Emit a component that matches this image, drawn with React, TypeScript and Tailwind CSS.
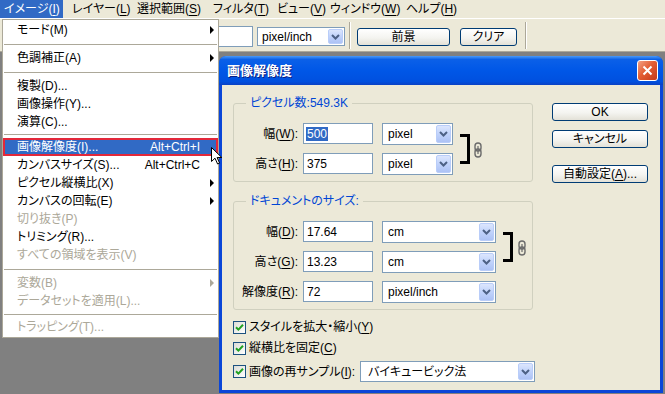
import React from "react";

const font =
  "font-['Liberation_Sans','Noto_Sans_CJK_JP',sans-serif] [font-feature-settings:'palt']";

const menuBar = [
  { label: "イメージ", key: "I", cls: "w-[63px] pl-[4px] bg-[#316ac5] text-white" },
  { label: "レイヤー", key: "L", cls: "ml-[9px] w-[65px]" },
  { label: "選択範囲", key: "S", cls: "w-[76px]" },
  { label: "フィルタ", key: "T", cls: "w-[64px]" },
  { label: "ビュー", key: "V", cls: "w-[53px]" },
  { label: "ウィンドウ", key: "W", cls: "w-[76px]" },
  { label: "ヘルプ", key: "H", cls: "" },
];

function Key({ k }: { k: string }) {
  return (
    <>
      (<span className="underline underline-offset-2">{k}</span>)
    </>
  );
}

function Arrow({ dim }: { dim?: boolean }) {
  return (
    <span
      className={
        dim
          ? "block w-0 h-0 border-y-[4px] border-y-transparent border-l-[4px] border-l-[#aca899]"
          : "block w-0 h-0 border-y-[4px] border-y-transparent border-l-[4px] border-l-black"
      }
    />
  );
}

function MenuItem({
  text,
  shortcut,
  sub,
  disabled,
  active,
}: {
  text: string;
  shortcut?: string;
  sub?: boolean;
  disabled?: boolean;
  active?: boolean;
}) {
  let cls = "flex items-center h-[18px] pl-[14px] text-black";
  if (disabled) cls = "flex items-center h-[18px] pl-[14px] text-[#aca899]";
  if (active)
    cls =
      "flex items-center h-[18px] pl-[14px] bg-[#316ac5] text-white shadow-[inset_0_0_0_2px_#e3283a]";
  return (
    <div className={cls}>
      <span className="flex-1 whitespace-nowrap">{text}</span>
      {shortcut && <span className="whitespace-nowrap">{shortcut}</span>}
      <span className="w-[18px] flex justify-end pr-[4px]">
        {sub && <Arrow dim={disabled} />}
      </span>
    </div>
  );
}

function Sep({ cls }: { cls: string }) {
  return (
    <div className={cls + " flex items-center px-[1px]"}>
      <div className="h-px w-full bg-[#aca899]" />
    </div>
  );
}

function DropBtn() {
  return (
    <div className="w-[15px] h-full flex items-center justify-center rounded-[2px] border border-[#b9cdf9] bg-[linear-gradient(to_bottom,#dce6fd_0%,#c1d3fb_50%,#adc2f5_100%)]">
      <svg width="9" height="6" viewBox="0 0 9 6">
        <path d="M1 1 L4.5 4.5 L8 1" fill="none" stroke="#4d6185" strokeWidth="2" />
      </svg>
    </div>
  );
}

function XpSelect({ value, cls, pad }: { value: string; cls: string; pad?: string }) {
  return (
    <div className={cls + " flex items-stretch border border-[#7f9db9] bg-white p-[1px]"}>
      <span className={(pad || "pl-[4px]") + " flex-1 flex items-center whitespace-nowrap"}>
        {value}
      </span>
      <DropBtn />
    </div>
  );
}

function XpInput({ value, selected, cls }: { value: string; selected?: boolean; cls?: string }) {
  return (
    <div
      className={
        (cls || "w-[70px] h-[21px]") +
        " flex items-center border border-[#7f9db9] bg-white pl-[2px]"
      }
    >
      <span className={selected ? "bg-[#316ac5] text-white px-px" : "px-px"}>{value}</span>
    </div>
  );
}

function XpButton({ children, cls }: { children: React.ReactNode; cls: string }) {
  return (
    <div
      className={
        cls +
        " flex items-center justify-center rounded-[3px] border border-[#003c74] bg-[linear-gradient(to_bottom,#ffffff_0%,#f4f4f0_55%,#e3e1d7_100%)] text-black"
      }
    >
      {children}
    </div>
  );
}

function Check({ children, cls }: { children: React.ReactNode; cls?: string }) {
  return (
    <div className={(cls || "h-[16px]") + " flex items-center"}>
      <div className="w-[13px] h-[13px] border border-[#1c5180] bg-[linear-gradient(135deg,#dcdcd6_0%,#ffffff_100%)] flex items-center justify-center">
        <svg width="9" height="9" viewBox="0 0 9 9">
          <path d="M1 4.2 L3.4 6.6 L8 1.8" fill="none" stroke="#21a121" strokeWidth="2" />
        </svg>
      </div>
      <span className="ml-[3px] whitespace-nowrap">{children}</span>
    </div>
  );
}

function Chain() {
  return (
    <svg width="8" height="16" viewBox="0 0 8 16">
      <rect x="1" y="1" width="6" height="8" rx="3" fill="none" stroke="#6b6b6b" strokeWidth="1.4" />
      <rect x="1" y="7" width="6" height="8" rx="3" fill="none" stroke="#6b6b6b" strokeWidth="1.4" />
      <line x1="4" y1="4" x2="4" y2="12" stroke="#6b6b6b" strokeWidth="1.2" />
    </svg>
  );
}

function Row({ label, k, value, selected, unit, selCls }: {
  label: string;
  k: string;
  value: string;
  selected?: boolean;
  unit: string;
  selCls: string;
}) {
  return (
    <div className="flex items-start h-[22px]">
      <span className="w-[64px] text-right h-[21px] flex items-center justify-end whitespace-nowrap">
        {label}
        <Key k={k} />:
      </span>
      <XpInput value={value} selected={selected} cls="ml-[5px] w-[70px] h-[21px]" />
      <XpSelect value={unit} cls={selCls} />
    </div>
  );
}

export default function App() {
  return (
    <div className={font + " relative w-[665px] h-[394px] overflow-hidden bg-[#808080] text-[12px] leading-[14px] text-black"}>
      {/* menu bar */}
      <div className="flex h-[19px] bg-[#ece9d8] border-b border-white">
        {menuBar.map((m) => (
          <div key={m.label} className={m.cls + " flex items-center h-[18px] whitespace-nowrap"}>
            {m.label}
            <Key k={m.key} />
          </div>
        ))}
      </div>

      {/* options bar */}
      <div className="flex items-start h-[33px] bg-[#ece9d8] border-b border-[#aca899] pl-[149px] pt-[7px]">
        <XpInput value="" cls="w-[104px] h-[21px]" />
        <XpSelect value="pixel/inch" cls="ml-[4px] mt-[1px] w-[88px] h-[19px]" pad="pl-[3px]" />
        <div className="ml-[4px] -mt-[4px] w-[2px] h-[27px] border-l border-[#aca899] border-r border-r-white" />
        <XpButton cls="ml-[6px] mt-[2px] w-[93px] h-[18px]">前景</XpButton>
        <XpButton cls="ml-[10px] mt-[2px] w-[57px] h-[18px]">クリア</XpButton>
        <div className="ml-[8px] -mt-[4px] w-[2px] h-[27px] border-l border-[#aca899] border-r border-r-white" />
      </div>

      {/* image menu */}
      <div className="absolute left-[2px] top-[19px] w-[217px] border border-[#aca899] bg-white py-[1px] z-20">
        <MenuItem text="モード(M)" sub />
        <Sep cls="h-[10px]" />
        <MenuItem text="色調補正(A)" sub />
        <Sep cls="h-[10px]" />
        <MenuItem text="複製(D)..." />
        <MenuItem text="画像操作(Y)..." />
        <MenuItem text="演算(C)..." />
        <Sep cls="h-[7px]" />
        <MenuItem text="画像解像度(I)..." shortcut="Alt+Ctrl+I" active />
        <MenuItem text="カンバスサイズ(S)..." shortcut="Alt+Ctrl+C" />
        <MenuItem text="ピクセル縦横比(X)" sub />
        <MenuItem text="カンバスの回転(E)" sub />
        <MenuItem text="切り抜き(P)" disabled />
        <MenuItem text="トリミング(R)..." />
        <MenuItem text="すべての領域を表示(V)" disabled />
        <Sep cls="h-[10px]" />
        <MenuItem text="変数(B)" sub disabled />
        <MenuItem text="データセットを適用(L)..." disabled />
        <Sep cls="h-[8px]" />
        <MenuItem text="トラッピング(T)..." disabled />
      </div>

      {/* mouse pointer */}
      <svg className="absolute left-[211px] top-[147px] z-30" width="12" height="18" viewBox="0 0 12 18">
        <path d="M0.5 0.5 L0.5 14.5 L4 11.2 L6.6 17 L8.6 16.1 L6.1 10.5 L10.8 10.5 Z" fill="white" stroke="black" strokeWidth="1" />
      </svg>

      {/* image size dialog */}
      <div className="absolute left-[219px] top-[56px] w-[444px] h-[337px] flex flex-col rounded-t-[7px] bg-[#0a46d8] z-10">
        <div className="flex items-center h-[29px] pl-[8px] pr-[5px] rounded-t-[7px] bg-[linear-gradient(to_bottom,#4a9af8_0%,#0b60e8_12%,#0057e7_50%,#0050df_88%,#0a41c4_100%)]">
          <span className="text-white font-bold text-[13px] [text-shadow:1px_1px_0_#0a1e80]">画像解像度</span>
          <div className="ml-auto w-[21px] h-[21px] rounded-[3px] border border-white bg-[linear-gradient(135deg,#f3a184_0%,#e35e34_45%,#c5391a_100%)] flex items-center justify-center">
            <svg width="11" height="11" viewBox="0 0 11 11">
              <path d="M1.5 1.5 L9.5 9.5 M9.5 1.5 L1.5 9.5" stroke="white" strokeWidth="2" />
            </svg>
          </div>
        </div>

        <div className="flex-1 mx-[3px] mb-[3px] bg-[#ece9d8] flex pl-[11px] pt-[11px]">
          <div className="w-[302px] flex flex-col">
            <fieldset className="w-[300px] border border-[#d0d0bf] rounded-[3px] pb-[6px]">
              <legend className="ml-[12px] px-[4px] text-[#0046d5]">ピクセル数:549.3K</legend>
              <div className="flex items-start pt-[13px]">
                <div className="flex flex-col gap-[8px]">
                  <Row label="幅" k="W" value="500" selected unit="pixel" selCls="ml-[9px] w-[71px] h-[22px]" />
                  <Row label="高さ" k="H" value="375" unit="pixel" selCls="ml-[9px] w-[71px] h-[22px]" />
                </div>
                <div className="ml-[7px] mt-[11px] w-[10px] h-[30px] border-y-[3px] border-r-[3px] border-black" />
                <div className="ml-[4px] mt-[19px]">
                  <Chain />
                </div>
              </div>
            </fieldset>

            <fieldset className="mt-[12px] w-[300px] border border-[#d0d0bf] rounded-[3px] pb-[6px]">
              <legend className="ml-[12px] px-[4px] text-[#0046d5]">ドキュメントのサイズ:</legend>
              <div className="flex items-start pt-[13px]">
                <div className="flex flex-col gap-[8px]">
                  <Row label="幅" k="D" value="17.64" unit="cm" selCls="ml-[9px] w-[114px] h-[22px]" />
                  <Row label="高さ" k="G" value="13.23" unit="cm" selCls="ml-[9px] w-[114px] h-[22px]" />
                  <Row label="解像度" k="R" value="72" unit="pixel/inch" selCls="ml-[9px] w-[114px] h-[22px]" />
                </div>
                <div className="ml-[7px] mt-[11px] w-[10px] h-[30px] border-y-[3px] border-r-[3px] border-black" />
                <div className="ml-[5px] mt-[19px]">
                  <Chain />
                </div>
              </div>
            </fieldset>

            <div className="mt-[9px] flex flex-col gap-[5px]">
              <Check>
                スタイルを拡大・縮小<Key k="Y" />
              </Check>
              <Check>
                縦横比を固定<Key k="C" />
              </Check>
              <div className="flex items-center h-[21px]">
                <Check>
                  画像の再サンプル<Key k="I" />:
                </Check>
                <XpSelect value="バイキュービック法" cls="ml-auto w-[175px] h-[21px]" pad="pl-[6px]" />
              </div>
            </div>
          </div>

          <div className="ml-[17px] mt-[7px] flex flex-col">
            <XpButton cls="w-[96px] h-[18px]">OK</XpButton>
            <XpButton cls="mt-[9px] w-[96px] h-[18px]">キャンセル</XpButton>
            <XpButton cls="mt-[17px] w-[96px] h-[18px]">
              自動設定<Key k="A" />...
            </XpButton>
          </div>
        </div>
      </div>
    </div>
  );
}
